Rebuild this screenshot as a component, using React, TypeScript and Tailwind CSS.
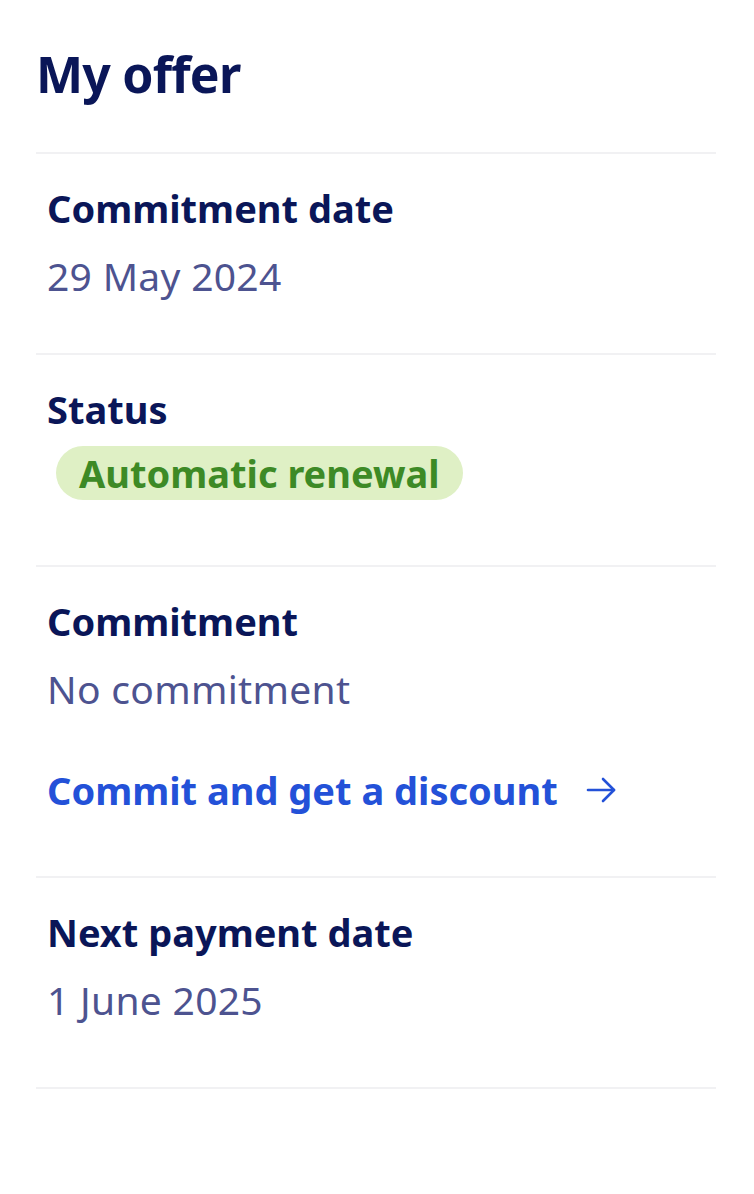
import React from 'react';

const font = { fontFamily: '"Noto Sans", "Open Sans", sans-serif' };

const Label: React.FC<{ children: React.ReactNode }> = ({ children }) => (
  <h3 className="text-[38px] leading-[48px] font-bold text-[#0a1658]">{children}</h3>
);

const Value: React.FC<{ children: React.ReactNode }> = ({ children }) => (
  <p className="mt-5 text-[39px] leading-[48px] text-[#4d5390] tracking-[0.3px]">{children}</p>
);

const ArrowIcon = () => (
  <svg width="30" height="26" viewBox="0 0 30 26" fill="none" stroke="currentColor" strokeWidth="2.6" strokeLinecap="round" strokeLinejoin="round">
    <path d="M2 13h26" />
    <path d="M17 2l11 11-11 11" />
  </svg>
);

export default function App() {
  return (
    <div className="min-h-screen bg-white pl-9 pr-[38px] pt-11" style={font}>
      {/* Header */}
      <h1 className="text-[50px] leading-[60px] font-bold text-[#0a1658] tracking-[-0.8px] mb-12">My offer</h1>

      <div className="border-t-2 border-[#f1f1f3]">
        {/* Commitment date */}
        <section className="px-[11px] pt-[30px] pb-[53px] border-b-2 border-[#f1f1f3]">
          <Label>Commitment date</Label>
          <Value>29 May 2024</Value>
        </section>

        {/* Status */}
        <section className="px-[11px] pt-[30px] pb-[65px] border-b-2 border-[#f1f1f3]">
          <Label>Status</Label>
          <div className="mt-[13px] ml-[9px] inline-flex h-[54px] items-center rounded-full bg-[#dff0c5] px-[23px]">
            <span className="text-[38px] font-bold text-[#3d8a26]">Automatic renewal</span>
          </div>
        </section>

        {/* Commitment */}
        <section className="px-[11px] pt-[30px] pb-[62px] border-b-2 border-[#f1f1f3]">
          <Label>Commitment</Label>
          <Value>No commitment</Value>
          <a href="#" className="mt-[53px] flex items-center gap-7 text-[#2351d8]">
            <span className="text-[38px] leading-[48px] font-bold">Commit and get a discount</span>
            <ArrowIcon />
          </a>
        </section>

        {/* Next payment date */}
        <section className="px-[11px] pt-[30px] pb-[63px] border-b-2 border-[#f1f1f3]">
          <Label>Next payment date</Label>
          <Value>1 June 2025</Value>
        </section>
      </div>
    </div>
  );
}
